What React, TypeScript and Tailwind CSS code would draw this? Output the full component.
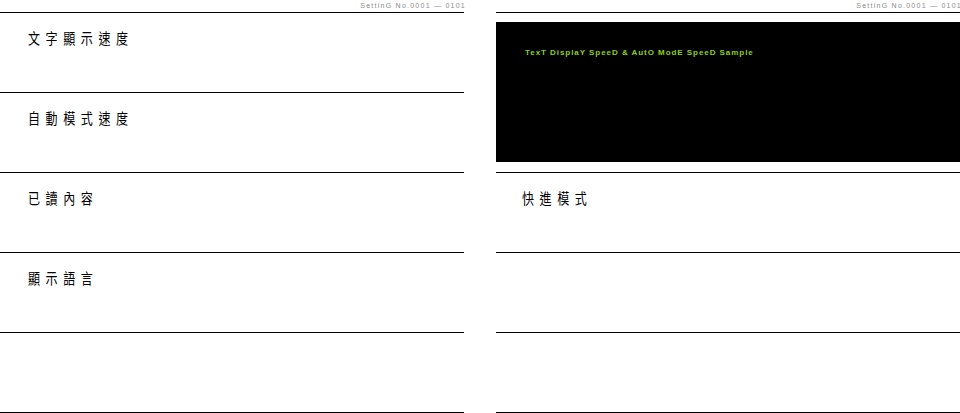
import React from "react";

const cjk = { fontFamily: '"Noto Sans CJK TC", "Noto Sans CJK JP", sans-serif' };

function Header() {
  return (
    <div className="h-[13px] border-b border-black flex justify-end">
      <span
        className="mr-[-2px] pt-[2px] text-[7px] leading-[7px] tracking-[1.25px] text-[#8a8a8a] whitespace-nowrap"
        style={{ fontFamily: '"Liberation Sans", Arial, sans-serif' }}
      >
        SettinG No.0001 — 0101
      </span>
    </div>
  );
}

function Row({ label, pl = "pl-[28px]" }: { label?: string; pl?: string }) {
  return (
    <div className={`h-[80px] border-b border-black pt-[17px] leading-[15px] ${pl}`}>
      {label && (
        <div
          className="w-max origin-left scale-x-[0.8] text-[15px] leading-[15px] tracking-[7px] font-normal text-black whitespace-nowrap"
          style={cjk}
        >
          {label}
        </div>
      )}
    </div>
  );
}

export default function App() {
  return (
    <div className="w-[960px] h-[413px] bg-white flex gap-[32px] overflow-hidden">
      <div className="w-[464px] flex flex-col shrink-0">
        <Header />
        <Row label="文字顯示速度" />
        <Row label="自動模式速度" />
        <Row label="已讀內容" />
        <Row label="顯示語言" />
        <Row />
      </div>
      <div className="w-[464px] flex flex-col shrink-0">
        <Header />
        <div className="h-[160px] border-b border-black pt-[9px]">
          <div className="h-[140px] bg-black pl-[29px] pt-[27px]">
            <div
              className="text-[8px] leading-[8px] font-bold tracking-[0.95px] text-[#8fd01a] whitespace-nowrap"
              style={{ fontFamily: '"Liberation Sans", Arial, sans-serif' }}
            >
              TexT DisplaY SpeeD &amp; AutO ModE SpeeD Sample
            </div>
          </div>
        </div>
        <Row label="快進模式" pl="pl-[26px]" />
        <Row />
        <Row />
      </div>
    </div>
  );
}
